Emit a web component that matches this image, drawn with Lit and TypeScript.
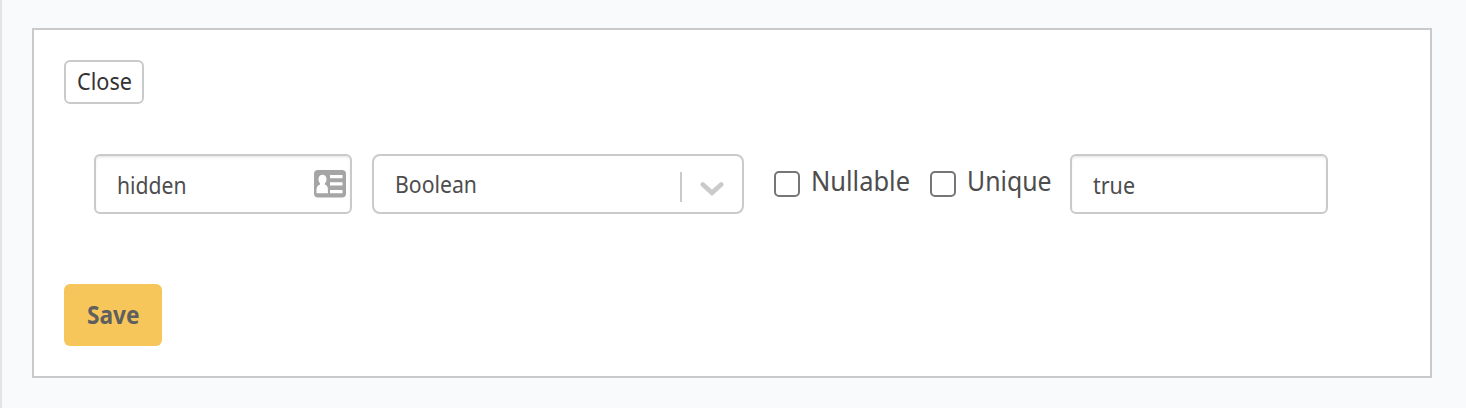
import { LitElement, html, css } from "lit";
import { customElement, property } from "lit/decorators.js";

/** A single line of text condensed to a given advance width. */
@customElement("fit-text")
class FitText extends LitElement {
  @property() text = "";
  @property({ type: Number }) width = 0;

  static styles = css`
    :host { display: block; flex: none; }
    svg { display: block; overflow: visible; }
    text { font-family: "Noto Sans", "Open Sans", sans-serif; fill: currentColor; }
  `;

  render() {
    return html`<svg width=${this.width} height="32" role="img" aria-label=${this.text}>
      <text x="0" y="24" textLength=${this.width} lengthAdjust="spacingAndGlyphs">${this.text}</text>
    </svg>`;
  }
}

@customElement("app-root")
class AppRoot extends LitElement {
  static styles = css`
    :host {
      display: block;
      box-sizing: border-box;
      height: 408px;
      padding: 28px 34px 30px 30px;
      border-left: 2px solid #e3e4e6;
      background: #f9fafc;
      color: #4d4d4d;
      font-family: "Noto Sans", "Open Sans", sans-serif;
      font-size: 23px;
    }
    * { box-sizing: border-box; }
    .panel {
      height: 350px;
      padding: 30px;
      border: 2px solid #cacaca;
      background: #fff;
      display: flex;
      flex-direction: column;
      align-items: flex-start;
    }
    button { margin: 0; font: inherit; display: flex; border-radius: 6px; }
    .close {
      width: 80px;
      height: 44px;
      padding: 4px 0 0 10.5px;
      border: 2px solid #cacaca;
      background: #fff;
      color: #333;
    }
    .row { display: flex; margin: 50px 0 0 30px; height: 60px; }
    .field {
      display: flex;
      justify-content: space-between;
      width: 258px;
      height: 60px;
      padding: 14px 4px 0 21px;
      border: 2px solid #cacaca;
      border-radius: 6px;
      background: #fff;
      box-shadow: inset 0 2px 3px -1px rgba(10, 10, 10, 0.12);
    }
    .select {
      width: 372px;
      margin: 0 30px 0 20px;
      padding: 13px 18px 0 21px;
      border-radius: 8px;
      box-shadow: none;
    }
    .indicator { display: flex; gap: 18px; }
    .divider { width: 2px; height: 30px; margin-top: 3px; background: #cacaca; }
    .chevron { margin-top: 12px; }
    .check { display: flex; width: 156px; }
    .unique { width: 140px; }
    .box {
      width: 26px;
      height: 26px;
      margin: 17px 10.5px 0 0;
      border: 2px solid #767676;
      border-radius: 5px;
      background: #fff;
    }
    .label { font-size: 26.5px; margin-top: 13px; }
    .save {
      width: 98px;
      height: 62px;
      margin-top: 70px;
      padding: 16px 0 0 22.5px;
      border: 0;
      background: #f6c65b;
      color: #5f5f5f;
      font-size: 24.5px;
      font-weight: 700;
    }
  `;

  render() {
    return html`
      <div class="panel">
        <button class="close"><fit-text text="Close" width="55"></fit-text></button>
        <div class="row">
          <div class="field">
            <fit-text text="hidden" width="69.5"></fit-text>
            <svg width="32" height="28" viewBox="0 0 32 28">
              <rect width="32" height="27.5" rx="4" fill="#a5a5a5" />
              <path fill="#fff" d="M8.500 4.700c2.400 0 4 1.800 4 4.300 0 2-.7 3.500-1.600 4.300v1.200c2 .6 3 2.500 3 5v3.700H2.500v-3.700c0-2.500 1.500-4.400 3.500-5v-1.200C5.200 12.500 4.500 11 4.500 9c0-2.500 1.600-4.300 4-4.300z" />
              <path fill="#fff" d="M16 5h12.500v3.300H16zM16 12.300h12.500v3.200H16zM16 20h12.500v3.200H16z" />
            </svg>
          </div>
          <div class="field select">
            <fit-text text="Boolean" width="82"></fit-text>
            <div class="indicator">
              <div class="divider"></div>
              <svg class="chevron" width="24" height="16" viewBox="0 0 24 16">
                <path d="M2.800 3.500 12 11.800 21.200 3.500" fill="none" stroke="#cacaca" stroke-width="4.600" stroke-linecap="round" />
              </svg>
            </div>
          </div>
          <div class="check">
            <div class="box" role="checkbox" aria-checked="false" aria-label="Nullable"></div>
            <fit-text class="label" text="Nullable" width="99"></fit-text>
          </div>
          <div class="check unique">
            <div class="box" role="checkbox" aria-checked="false" aria-label="Unique"></div>
            <fit-text class="label" text="Unique" width="84.5"></fit-text>
          </div>
          <div class="field"><fit-text text="true" width="42"></fit-text></div>
        </div>
        <button class="save"><fit-text text="Save" width="52.5"></fit-text></button>
      </div>
    `;
  }
}
